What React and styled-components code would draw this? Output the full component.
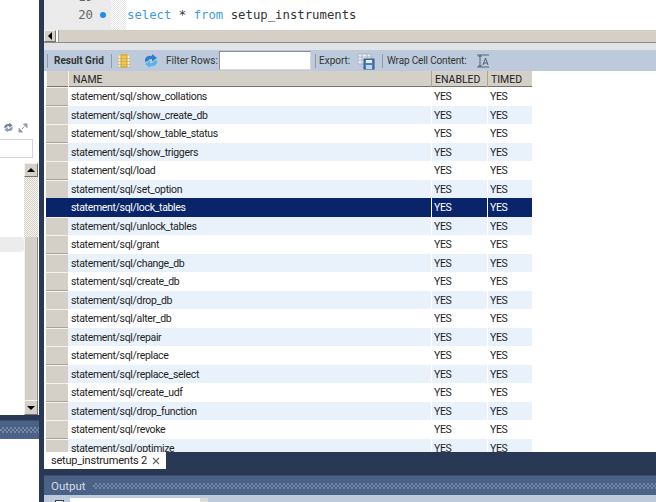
import React from 'react';
import styled, { createGlobalStyle } from 'styled-components';

const NAMES = [
    'show_collations', 'show_create_db', 'show_table_status', 'show_triggers', 'load',
    'set_option', 'lock_tables', 'unlock_tables', 'grant', 'change_db', 'create_db',
    'drop_db', 'alter_db', 'repair', 'replace', 'replace_select', 'create_udf',
    'drop_function', 'revoke', 'optimize',
];

const GlobalStyle = createGlobalStyle`
    html, body {
        margin: 0;
        padding: 0;
        background: #fff;
    }
    * {
        box-sizing: border-box;
    }
`;

const Page = styled.div`
    width: 656px;
    height: 502px;
    display: flex;
    overflow: hidden;
    background: #293955;
    font-family: Roboto, "Liberation Sans", Arial, sans-serif;
    font-size: 10.5px;
    color: #1e1e1e;
`;

/* left panel */
const Side = styled.div`
    width: 39px;
    flex: none;
    display: flex;
    flex-direction: column;
    background: #fff;
`;

const SideIcons = styled.div`
    height: 139px;
    flex: none;
    display: flex;
    align-items: flex-end;
    gap: 4px;
    padding: 0 0 6px 3px;
`;

const SideInput = styled.div`
    width: 33px;
    height: 19px;
    flex: none;
    background: #fff;
    border: 1px solid #d4d4d4;
    border-left: 0;
`;

const Tree = styled.div`
    margin-top: 5px;
    height: 252px;
    flex: none;
    display: flex;
    padding-right: 1px;
`;

const TreeList = styled.div`
    flex: 1;
    padding-top: 74px;
`;

const TreeRow = styled.div`
    height: 15px;
    background: #ececec;
    border-radius: 0 3px 3px 0;
`;

const VScroll = styled.div`
    width: 14px;
    flex: none;
    display: flex;
    flex-direction: column;
`;

const ScrollBtn = styled.div`
    flex: none;
    width: ${p => p.$w || 14}px;
    height: ${p => p.$h || 14}px;
    display: flex;
    align-items: center;
    justify-content: center;
    background: #d4d0c8;
    border: 1px solid;
    border-color: #f4f3f0 #77746e #77746e #f4f3f0;
`;

const ArrowUp = styled.div`
    border-left: 4px solid transparent;
    border-right: 4px solid transparent;
    border-bottom: 4px solid #000;
`;

const ArrowDown = styled(ArrowUp)`
    border-bottom: 0;
    border-top: 4px solid #000;
`;

const ArrowLeft = styled.div`
    border-top: 4px solid transparent;
    border-bottom: 4px solid transparent;
    border-right: 4px solid #000;
`;

const Track = styled.div`
    flex: 0 0 60px;
    background: repeating-conic-gradient(#d4d0c8 0 25%, #f6f5f2 0 50%) 0 0 / 2px 2px;
`;

const Thumb = styled.div`
    flex: 1;
    background: #d4d0c8;
    border-left: 1px solid #f4f3f0;
    border-right: 1px solid #8f8c85;
`;

const NavyBar = styled.div`
    height: ${p => p.$h}px;
    flex: none;
    background: #293955;
`;

const PanelHead = styled.div`
    height: ${p => p.$h || 20}px;
    flex: none;
    display: flex;
    align-items: center;
    gap: 7px;
    padding: 0 0 0 ${p => p.$pad || 0}px;
    background: #4b6185;
    border-top: 1px solid #3a4e70;
    color: #d5dde8;
    font-size: 11.5px;
`;

const Dither = styled.div`
    flex: 1;
    height: 6px;
    background: repeating-conic-gradient(#7387a6 0 25%, #4b6185 0 50%) 0 0 / 4px 4px;
`;

const SideBlank = styled.div`
    flex: 1;
    background: #fff;
`;

/* right side */
const Main = styled.div`
    margin-left: 5px;
    flex: 1;
    min-width: 0;
    display: flex;
    flex-direction: column;
    background: #fff;
`;

const Editor = styled.div`
    height: 30px;
    flex: none;
    display: flex;
    overflow: hidden;
    background: #fff;
    font-family: "DejaVu Sans Mono", monospace;
    font-size: 12.3px;
`;

const Gutter = styled.div`
    width: 67px;
    flex: none;
    display: flex;
    flex-direction: column;
    justify-content: flex-end;
    align-items: flex-end;
    padding: 0 18px 6px 0;
    background: #ebebeb;
    color: #666;
    line-height: 18px;
`;

const LineNo = styled.div`
    position: relative;
    flex: none;
`;

const Dot = styled.span`
    position: absolute;
    left: 22px;
    top: 6px;
    width: 6px;
    height: 6px;
    border-radius: 50%;
    background: #1c8cf2;
`;

const Fold = styled.div`
    width: 15px;
    flex: none;
    background: repeating-conic-gradient(#e4e4e4 0 25%, #fff 0 50%) 0 0 / 2px 2px;
`;

const Code = styled.div`
    flex: 1;
    align-self: flex-end;
    padding: 0 0 5px 1px;
    line-height: 19px;
    color: #333;
    white-space: pre;
`;

const Keyword = styled.span`
    color: #3f9ce0;
`;

const HScroll = styled.div`
    height: 13px;
    flex: none;
    display: flex;
    background: #d4d0c8;
    border-bottom: 1px solid #8f8c85;
`;

const HScrollThumb = styled.div`
    width: 3px;
    flex: none;
    background: #fff;
    border-right: 1px solid #9b988f;
`;

const Gap = styled.div`
    height: 7px;
    flex: none;
    background: #e1e3e7;
`;

const Toolbar = styled.div`
    height: 21px;
    flex: none;
    display: flex;
    align-items: center;
    background: #bccadc;
    color: #333;
    font-size: 10px;
    white-space: nowrap;
`;

const Sep = styled.div`
    width: 1px;
    height: 14px;
    flex: none;
    margin: 0 ${p => p.$r ?? 4}px 0 ${p => p.$l ?? 4}px;
    background: #8e9aab;
`;

const BarLabel = styled.span`
    flex: none;
    width: ${p => p.$w}px;
    font-weight: ${p => (p.$bold ? 700 : 400)};
    letter-spacing: ${p => p.$track || 0}px;
`;

const BarIcon = styled.svg`
    flex: none;
    margin: 0 ${p => p.$r || 0}px 0 ${p => p.$l || 0}px;
`;

const FilterInput = styled.div`
    width: 92px;
    height: 19px;
    flex: none;
    background: #fff;
    border: 1px solid #8d8d8d;
    border-right-color: #d8d8d8;
    border-bottom-color: #d8d8d8;
`;

const Results = styled.div`
    flex: 1 1 0;
    min-height: 0;
    overflow: hidden;
    padding-left: 2px;
    background: #fff;
`;

const Grid = styled.div`
    width: 486px;
`;

const HeadRow = styled.div`
    height: 16px;
    display: grid;
    grid-template-columns: 22px 363px 56px 45px;
    background: #d4d0c8;
    border-bottom: 1px solid #77746e;
`;

const HeadCell = styled.div`
    padding-left: ${p => p.$pad || 3}px;
    border-left: 1px solid ${p => (p.$first ? '#f4f3f0' : '#a7a49c')};
    line-height: 17px;
    font-size: 10.5px;
    color: #222;
`;

const Row = styled.div`
    height: 18.53px;
    display: grid;
    grid-template-columns: 22px 363px 56px 45px;
    background: ${p => (p.$selected ? '#0a246a' : p.$alt ? '#e9f1fb' : '#fff')};
    color: ${p => (p.$selected ? '#fff' : '#1e1e1e')};
`;

const RowHead = styled.div`
    background: ${p => (p.$selected ? '#0a246a' : '#d4d0c8')};
    border-top: 1px solid ${p => (p.$selected ? '#0a246a' : '#f4f3f0')};
    border-bottom: 1px solid ${p => (p.$selected ? '#0a246a' : '#a7a49c')};
`;

const Cell = styled.div`
    padding-left: 2px;
    line-height: 19px;
    letter-spacing: -0.33px;
    border-left: 1px solid ${p => (p.$line ? '#fff' : 'transparent')};
    white-space: nowrap;
`;

const TabStrip = styled.div`
    height: 17px;
    flex: none;
    background: #293955;
`;

const Tab = styled.div`
    width: 122px;
    height: 17px;
    display: flex;
    align-items: center;
    gap: 5px;
    padding-left: 7px;
    background: #fff;
    color: #222;
    font-size: 11px;
    letter-spacing: -0.2px;
    white-space: nowrap;
`;

const OutputBody = styled.div`
    height: 7px;
    flex: none;
    display: flex;
    align-items: flex-start;
    padding: 3px 0 0 11px;
    gap: 6px;
    overflow: hidden;
    background: #bccadc;
`;

const Check = styled.div`
    width: 9px;
    height: 9px;
    flex: none;
    margin-top: 2px;
    background: #eef1f5;
    border: 1px solid #444;
`;

const OutputField = styled.div`
    width: 138px;
    height: 7px;
    flex: none;
    background: linear-gradient(to right, #fff 130px, #ddd 130px);
`;

const RefreshIcon = ({ size = 16, c1 = '#2f7fd0', c2 = '#58b4ee', l, r }) => (
    <BarIcon width={size} height={size} viewBox="0 0 16 16" $l={l} $r={r}>
        <path d="M2 9 L2 6 Q4 2 9 3 L9 1 L14 5 L9 8.5 L9 6 Q6 5.5 5 8 Z" fill={c1} />
        <path d="M14 7 L14 10 Q12 14 7 13 L7 15 L2 11 L7 7.5 L7 10 Q10 10.5 11 8 Z" fill={c2} />
    </BarIcon>
);

const App = () => {
    return (
        <Page>
            <GlobalStyle />
            <Side>
                <SideIcons>
                    <RefreshIcon size={11} c1="#6f8196" c2="#8d9cae" />
                    <svg width="10" height="10" viewBox="0 0 10 10">
                        <path d="M5.5 1 H9 V4.5 Z M4.5 9 H1 V5.5 Z M4 6 L6.5 3.5" fill="#8c98a8" stroke="#8c98a8" />
                    </svg>
                </SideIcons>
                <SideInput />
                <Tree>
                    <TreeList>
                        <TreeRow />
                    </TreeList>
                    <VScroll>
                        <ScrollBtn><ArrowUp /></ScrollBtn>
                        <Track />
                        <Thumb />
                        <ScrollBtn $h={15}><ArrowDown /></ScrollBtn>
                    </VScroll>
                </Tree>
                <NavyBar $h={5} />
                <PanelHead $h={19}>
                    <Dither />
                </PanelHead>
                <SideBlank />
            </Side>
            <Main>
                <Editor>
                    <Gutter>
                        <LineNo>19</LineNo>
                        <LineNo>20<Dot /></LineNo>
                    </Gutter>
                    <Fold />
                    <Code><Keyword>select</Keyword> * <Keyword>from</Keyword> setup_instruments</Code>
                </Editor>
                <HScroll>
                    <ScrollBtn $w={12} $h={12}><ArrowLeft /></ScrollBtn>
                    <HScrollThumb />
                </HScroll>
                <Gap />
                <Toolbar>
                    <Sep $l={3} $r={6} />
                    <BarLabel $bold $w={51}>Result Grid</BarLabel>
                    <Sep $l={6} $r={5} />
                    <BarIcon width="14" height="14" viewBox="0 0 14 14" $r={12}>
                        <rect x="1" y="1" width="12" height="12" fill="#f4f0dc" stroke="#c9c2a0" />
                        <rect x="4" y="1" width="6" height="12" fill="#f6c63f" stroke="#d99b1e" />
                        <path d="M1 4.5 H13 M1 7.5 H13 M1 10.5 H13" stroke="#b9ae86" strokeWidth="0.7" />
                    </BarIcon>
                    <RefreshIcon r={7} />
                    <BarLabel $w={53}>Filter Rows:</BarLabel>
                    <FilterInput />
                    <Sep $l={4} $r={3} />
                    <BarLabel $w={38}>Export:</BarLabel>
                    <BarIcon width="18" height="18" viewBox="0 0 18 18" $r={6}>
                        <path d="M1 2 H14 V12 H1 Z M1 5 H14 M1 8 H14 M5 2 V12 M10 2 V12" fill="#e8ecf2" stroke="#a3afbf" strokeWidth="0.8" />
                        <rect x="7" y="7" width="10" height="10" fill="#4a7fb5" stroke="#2d5a8a" />
                        <rect x="9" y="8" width="6" height="3" fill="#e6eef6" />
                        <rect x="9" y="13" width="6" height="4" fill="#c5d4e4" />
                    </BarIcon>
                    <Sep $l={1} $r={4} />
                    <BarLabel $w={90} $track={-0.15}>Wrap Cell Content:</BarLabel>
                    <BarIcon width="12" height="14" viewBox="0 0 12 14">
                        <path d="M0 1 H12 M0 13 H12 M3 1 V13 M1.5 3 L3 1.5 L4.5 3 M1.5 11 L3 12.5 L4.5 11" fill="none" stroke="#43566f" strokeWidth="0.9" />
                        <path d="M6 11 L8.5 4 L11 11 M7 9 H10" fill="none" stroke="#43566f" strokeWidth="0.9" />
                    </BarIcon>
                </Toolbar>
                <Results>
                    <Grid>
                        <HeadRow>
                            <HeadCell $first />
                            <HeadCell $first $pad={4}>NAME</HeadCell>
                            <HeadCell>ENABLED</HeadCell>
                            <HeadCell>TIMED</HeadCell>
                        </HeadRow>
                        {NAMES.map((name, i) => (
                            <Row key={name} $alt={i % 2 === 1} $selected={name === 'lock_tables'}>
                                <RowHead $selected={name === 'lock_tables'} />
                                <Cell>statement/sql/{name}</Cell>
                                <Cell $line>YES</Cell>
                                <Cell $line>YES</Cell>
                            </Row>
                        ))}
                    </Grid>
                </Results>
                <TabStrip>
                    <Tab>
                        setup_instruments 2
                        <svg width="8" height="8" viewBox="0 0 8 8">
                            <path d="M1 1 L7 7 M7 1 L1 7" stroke="#666" strokeWidth="1.1" />
                        </svg>
                    </Tab>
                </TabStrip>
                <NavyBar $h={6} />
                <PanelHead $pad={7}>
                    Output
                    <Dither />
                </PanelHead>
                <OutputBody>
                    <Check />
                    <OutputField />
                </OutputBody>
            </Main>
        </Page>
    );
};

export default App;
